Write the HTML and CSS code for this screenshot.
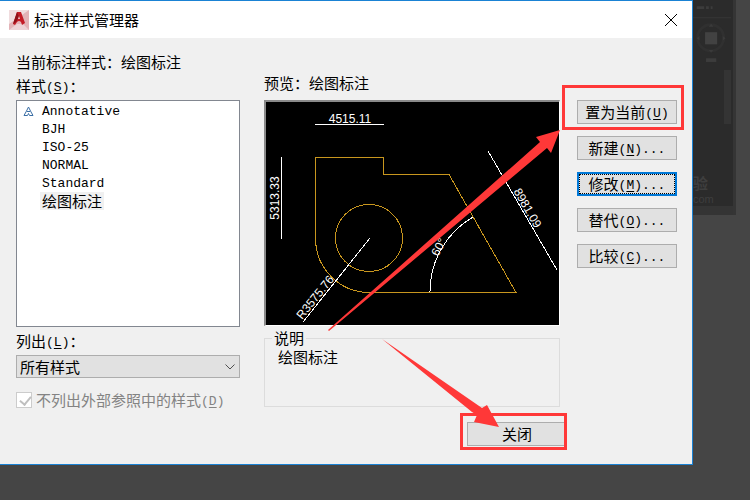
FILE: index.html
```html
<!DOCTYPE html>
<html lang="zh-CN">

<head>
    <meta charset="UTF-8">
    <meta name="viewport" content="width=device-width, initial-scale=1.0">
    <title>标注样式管理器</title>
    <link rel="stylesheet" href="styles.css">
</head>

<body>
    <div class="desktop">
        <main class="dialog">
            <header class="titlebar">
                <svg class="app-icon" viewBox="0 0 20 20" aria-hidden="true">
                    <rect width="20" height="20" fill="#e3b3b7" />
                    <path d="M0 0H20L0 14Z" fill="#f0dcde" />
                    <path d="M0 20L8 14H14L20 20Z" fill="#edd3d6" />
                    <path d="M8 2H12L16 13L13 15L12 12Q10 10 8 12L6 15L4 14Z" fill="#c41c26" />
                    <path d="M8 2L10 7L7 12L4 14Z" fill="#8f1018" />
                    <path d="M9 9L10 6L11 9Z" fill="#f3c7ca" />
                </svg>
                <h1>标注样式管理器</h1>
                <button class="close-x" type="button" aria-label="关闭窗口">
                    <svg viewBox="0 0 12 12"><path d="M0 0L12 12M12 0L0 12" /></svg>
                </button>
            </header>

            <div class="content">
                <section class="styles-col">
                    <p class="current">当前标注样式：绘图标注</p>
                    <p class="label" id="styles-label">样式<span class="key">(<u>S</u>)</span>：</p>
                    <ul class="listbox" role="listbox" tabindex="0" aria-labelledby="styles-label">
                        <li role="option">
                            <svg class="anno-icon" viewBox="0 0 11 11" aria-hidden="true">
                                <path d="M5.500 1L7.500 5L10 9.500H6.500L5.500 7.500L4.500 9.500H1L3.500 5ZM4 5.500H7" />
                            </svg>
                            <span class="key">Annotative</span>
                        </li>
                        <li role="option"><span class="key">BJH</span></li>
                        <li role="option"><span class="key">ISO-25</span></li>
                        <li role="option"><span class="key">NORMAL</span></li>
                        <li role="option"><span class="key">Standard</span></li>
                        <li role="option" aria-selected="true"><span class="selected">绘图标注</span></li>
                    </ul>
                    <label class="list-label" for="filter">列出<span class="key">(<u>L</u>)</span>：</label>
                    <div class="select-wrap">
                        <select id="filter">
                            <option>所有样式</option>
                        </select>
                        <svg class="chevron" viewBox="0 0 10 6" aria-hidden="true"><path d="M0.500 0.500L5 5L9.500 0.500" /></svg>
                    </div>
                    <label class="check">
                        <input type="checkbox" checked disabled>
                        <span>不列出外部参照中的样式<span class="key">(<u>D</u>)</span></span>
                    </label>
                </section>

                <section class="preview-col">
                    <p class="label">预览：绘图标注</p>
                    <svg class="preview" viewBox="2 2 293 223" role="img" aria-label="预览">
                        <g class="part">
                            <path d="M51.500 138V57.500H119.500V74.500H185L252 192.500H105A54 54 0 0 1 51.500 138" />
                            <circle cx="105" cy="138" r="33.500" />
                        </g>
                        <g class="dim">
                            <path d="M51 24.500H120M17.500 57V139M224 51L293 170M106 138L39 222" />
                            <path d="M209 117A86 86 0 0 0 166 192" />
                        </g>
                        <g class="dim-text">
                            <text x="86" y="23" text-anchor="middle">4515.11</text>
                            <text transform="translate(15 98) rotate(-90)" text-anchor="middle">5313.33</text>
                            <text transform="translate(260 110) rotate(60)" text-anchor="middle">8981.09</text>
                            <text transform="translate(38 220) rotate(-51)">R3575.76</text>
                            <text transform="translate(174 157) rotate(-62)">60°</text>
                        </g>
                    </svg>
                    <fieldset class="description">
                        <legend>说明</legend>
                        绘图标注
                    </fieldset>
                    <button class="btn close-btn" type="button">关闭</button>
                </section>

                <nav class="actions">
                    <button class="btn" type="button">置为当前<span class="key">(<u>U</u>)</span></button>
                    <button class="btn" type="button">新建<span class="key">(<u>N</u>)...</span></button>
                    <button class="btn focused" type="button">修改<span class="key">(<u>M</u>)...</span></button>
                    <button class="btn" type="button">替代<span class="key">(<u>O</u>)...</span></button>
                    <button class="btn" type="button">比较<span class="key">(<u>C</u>)...</span></button>
                </nav>
            </div>
        </main>

        <!-- edge of the drawing window behind the dialog -->
        <aside class="backdrop">
            <svg class="viewcube" viewBox="0 0 43 70" aria-hidden="true">
                <path d="M0 16.500H41" stroke="#383838" />
                <path d="M4 5.500H21" stroke="#3c3c3c" stroke-width="3" stroke-dasharray="8 2 3 2" />
                <circle cx="19" cy="38" r="14" fill="none" stroke="#303030" stroke-width="3" />
                <rect x="13" y="32" width="13" height="13" fill="#424242" />
                <path d="M17 26L19.500 23L22 26ZM17 51L19.500 54L22 51ZM7 36L4 38.500L7 41ZM32 36L35 38.500L32 41Z" fill="#3a3a3a" />
                <rect x="14" y="60" width="11" height="4" fill="#3c3c3c" />
            </svg>
            <div class="navbar"></div>
            <p class="mark">验</p>
            <p class="mark-url">com</p>
            <div class="statusbar"></div>
        </aside>

        <svg class="notes" width="750" height="500" viewBox="0 0 750 500" aria-hidden="true">
            <rect x="563.500" y="86.500" width="119" height="42" />
            <rect x="461.500" y="414.500" width="104" height="34" />
            <path d="M328 330L540 142L536 137L560 130L551 153L547 148L329 331Z" />
            <path d="M382 339L482 408L487 405L499 427L474 422L477 415L472 412Z" />
        </svg>
    </div>
</body>

</html>
```
FILE: styles.css
```css
* {
    box-sizing: border-box;
}

body {
    margin: 0;
    background-color: #454545;
    color: #000;
    font-family: "Noto Sans CJK SC", sans-serif;
    font-size: 15px;
    line-height: 18px;
}

p,
h1,
ul {
    margin: 0;
    padding: 0;
}

.desktop {
    position: relative;
    display: flex;
    align-items: flex-start;
    min-height: 100vh;
    overflow: hidden;
}

.dialog {
    flex: 1;
    background-color: #f0f0f0;
    border: 1px solid #1a82d4;
    border-left: 0;
}

/* western text and access keys */
.key {
    font-family: "Liberation Mono", monospace;
    font-size: 13px;
    line-height: 1;
    vertical-align: 1px;
}

u {
    text-underline-offset: 2px;
}

/* title bar */
.titlebar {
    display: flex;
    align-items: center;
    gap: 5px;
    height: 37px;
    padding: 0 15px 0 9px;
    background-color: #fff;
}

.titlebar h1 {
    flex: 1;
    font-size: 15px;
    font-weight: 400;
}

.app-icon {
    width: 20px;
    height: 20px;
}

.close-x {
    display: flex;
    padding: 0;
    border: 0;
    background: none;
}

.close-x svg {
    width: 12px;
    height: 12px;
    overflow: visible;
    fill: none;
    stroke: #000;
}

/* dialog body */
.content {
    display: flex;
    align-items: flex-start;
    padding: 15px 15px 18px 16px;
}

.styles-col {
    flex: 0 0 224px;
    display: flex;
    flex-direction: column;
}

.current {
    margin-bottom: 6px;
}

.label {
    margin-bottom: 5px;
}

.listbox {
    height: 227px;
    padding: 1px 0 0 5px;
    border: 1px solid #828790;
    background-color: #fff;
    list-style: none;
}

.listbox li {
    display: flex;
    align-items: center;
    height: 18px;
    padding-left: 20px;
}

.listbox .anno-icon {
    width: 11px;
    height: 11px;
    margin: 0 8px 0 -19px;
    fill: none;
    stroke: #3a6ea5;
}

.selected {
    margin-left: -2px;
    padding: 0 2px;
    background-color: #f0f0f0;
}

.list-label {
    margin: 5px 0;
}

.select-wrap {
    position: relative;
}

.select-wrap select {
    display: block;
    width: 100%;
    height: 23px;
    padding: 0 3px;
    appearance: none;
    border: 1px solid #adadad;
    border-radius: 0;
    background-color: #e1e1e1;
    color: #000;
    font: inherit;
}

.chevron {
    position: absolute;
    top: 9px;
    right: 5px;
    width: 10px;
    height: 6px;
    fill: none;
    stroke: #505050;
}

.check {
    display: flex;
    align-items: center;
    gap: 4px;
    margin-top: 13px;
    color: #838383;
}

.check input {
    width: 16px;
    height: 16px;
    margin: 0;
    appearance: none;
    border: 1px solid #ccc;
    background-color: #fff;
}

.check input:checked::before {
    content: "";
    display: block;
    width: 5px;
    height: 9px;
    margin: 1px 0 0 5px;
    border: solid #bfbfbf;
    border-width: 0 2px 2px 0;
    transform: rotate(40deg);
}

/* preview */
.preview-col {
    flex: 1;
    display: flex;
    flex-direction: column;
    margin: 21px 17px 0 24px;
}

.preview-col .label {
    margin-bottom: 8px;
}

.preview {
    width: 100%;
    border: 1px solid #fff;
    border-top: 2px solid #8a8a8a;
    border-left: 2px solid #8a8a8a;
    background-color: #000;
}

.part,
.dim {
    fill: none;
    shape-rendering: crispEdges;
}

.part {
    stroke: #c8961e;
}

.dim {
    stroke: #fff;
}

.dim-text {
    fill: #fff;
    font-family: "Liberation Sans", sans-serif;
    font-size: 12px;
}

.description {
    height: 78px;
    margin: 3px 0 0;
    padding: 1px 13px;
    border: 1px solid #dcdcdc;
}

.description legend {
    margin-left: -6px;
    padding: 0 2px;
}

/* buttons */
.btn {
    width: 100px;
    height: 24px;
    padding: 0;
    border: 1px solid #adadad;
    background-color: #e1e1e1;
    color: #000;
    font: inherit;
    line-height: 18px;
}

.focused {
    border: 2px solid #0078d7;
    outline: 1px dotted #000;
    outline-offset: -3px;
}

.close-btn {
    align-self: flex-end;
    margin: 15px -7px 0 0;
}

.actions {
    display: flex;
    flex-direction: column;
    gap: 12px;
    padding-top: 47px;
}

/* drawing window behind */
.backdrop {
    display: flex;
    flex: 0 0 43px;
    flex-direction: column;
    height: 215px;
    margin-right: 14px;
    border-right: 3px solid #353535;
    background-color: #2b2b2b;
    color: #3e3e3e;
}

.viewcube {
    width: 40px;
    height: 70px;
}

.navbar {
    width: 7px;
    height: 54px;
    margin-left: 31px;
    background-color: #343434;
}

.mark {
    margin-top: 50px;
    font-weight: 700;
}

.mark-url {
    font: 11px/14px "Liberation Sans", sans-serif;
}

.statusbar {
    height: 9px;
    background-color: #343434;
}

/* red call-outs */
.notes {
    position: absolute;
    top: 0;
    left: 0;
    pointer-events: none;
}

.notes rect {
    fill: none;
    stroke: #ff3838;
    stroke-width: 3px;
}

.notes path {
    fill: #ff3838;
}
```
